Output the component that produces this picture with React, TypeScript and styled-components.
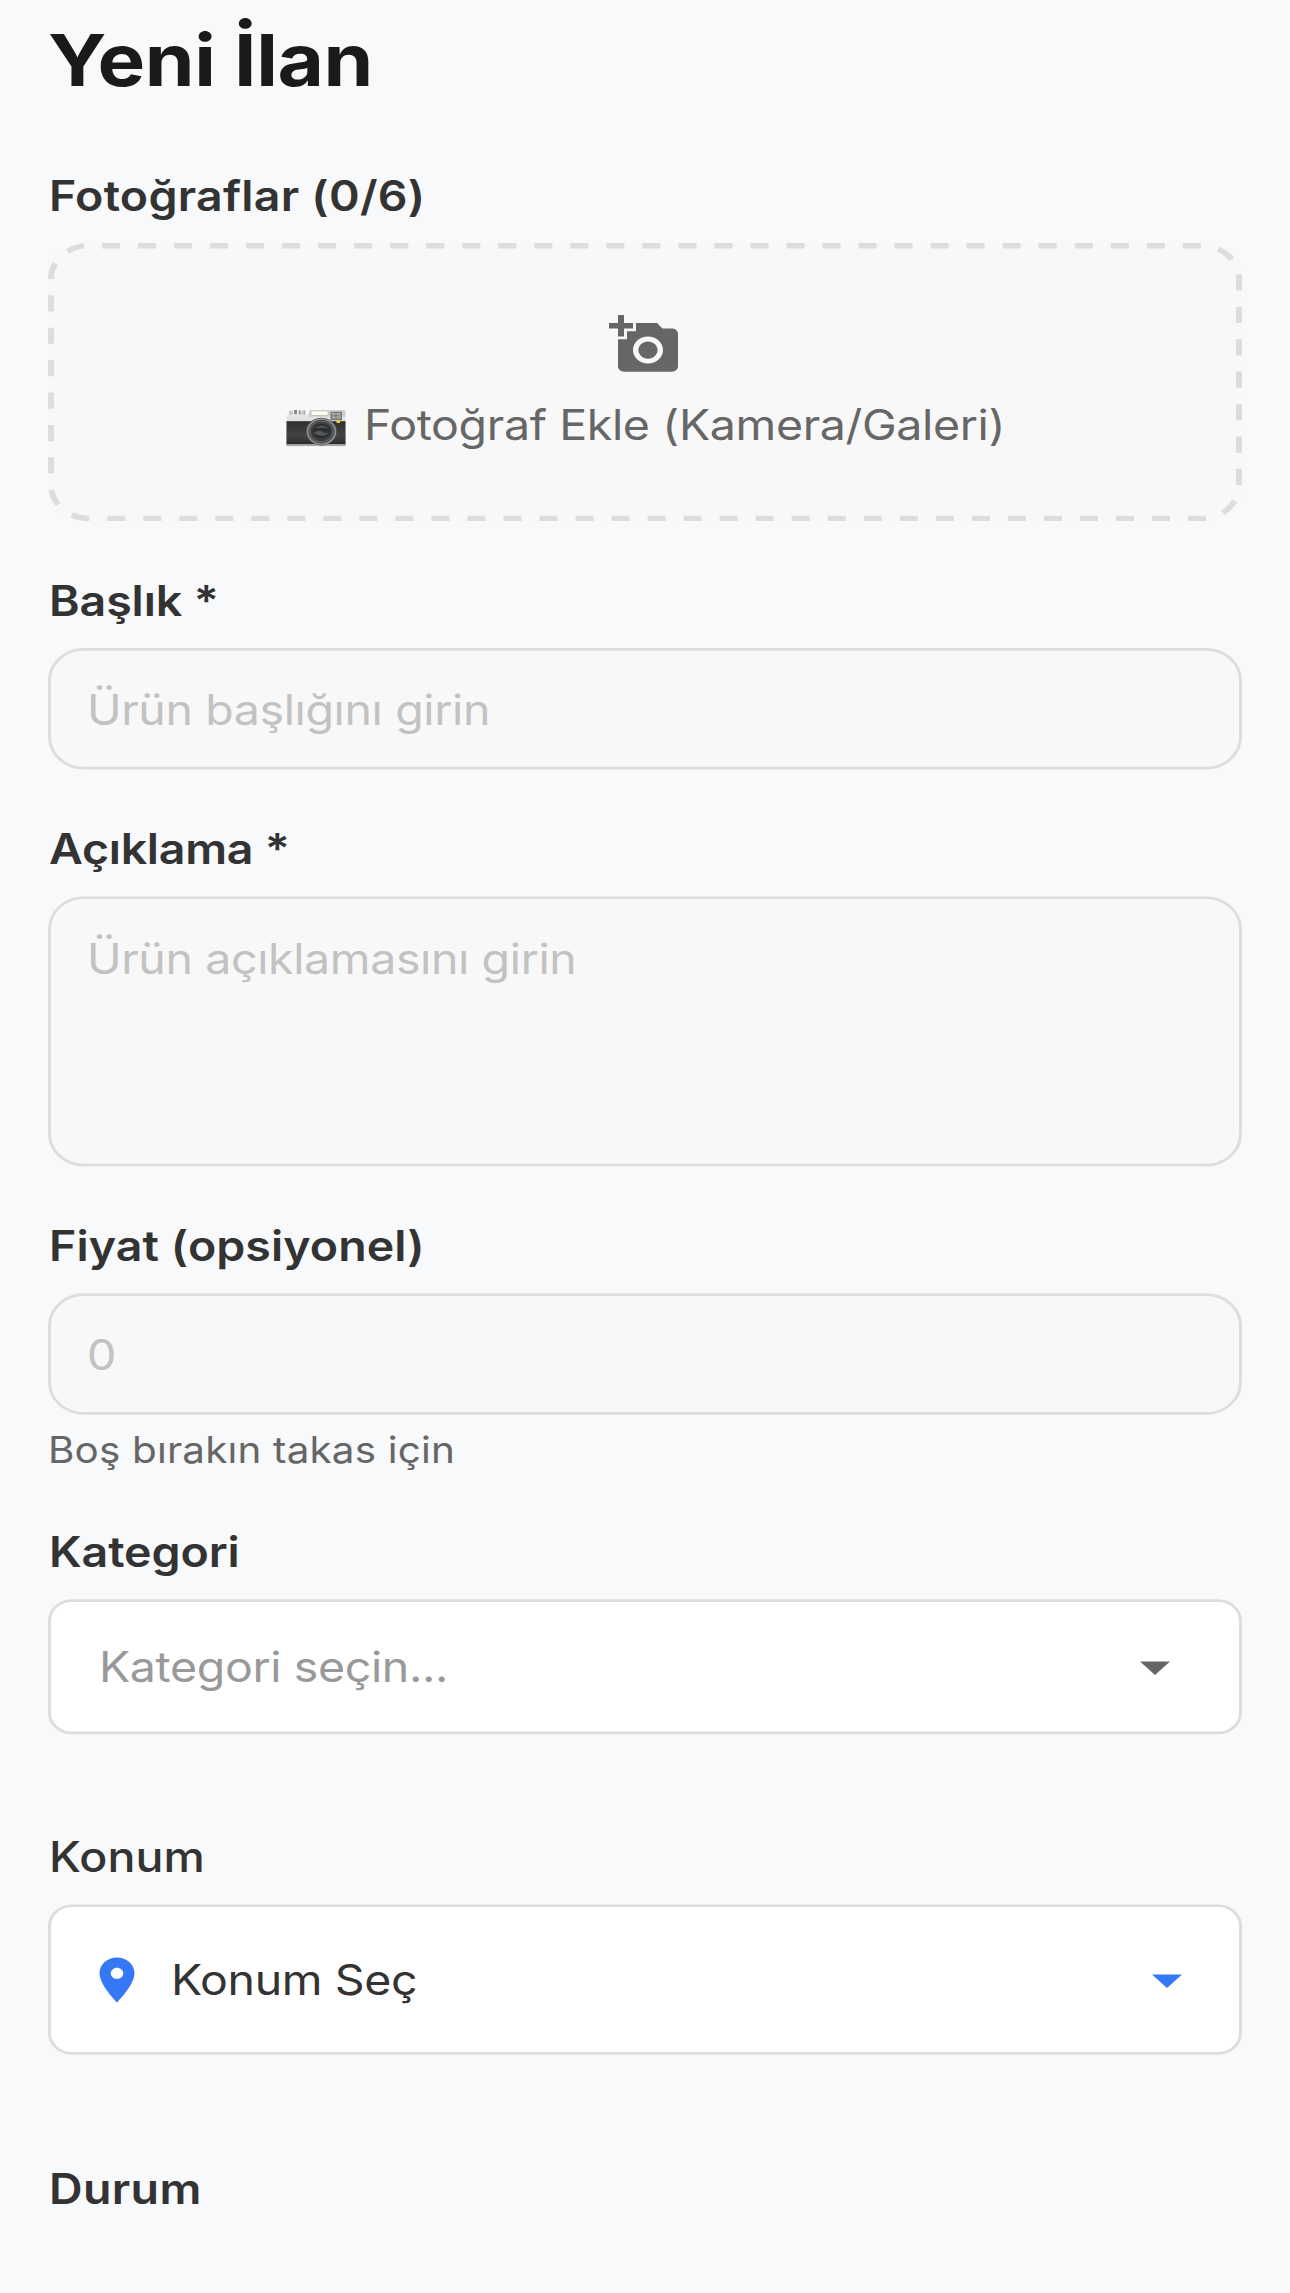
import React from 'react';
import styled, { createGlobalStyle } from 'styled-components';

const GlobalStyle = createGlobalStyle`
  * { box-sizing: border-box; }
  body { margin: 0; background: #f8f9fb; }
`;

const Viewport = styled.div`
  width: 1290px;
  height: 2293px;
  overflow: hidden;
  background: #f8f9fb;
`;

/* The form is laid out on a 3x grid and compressed vertically to fit the viewport. */
const Screen = styled.main`
  display: flex;
  flex-direction: column;
  width: 1290px;
  height: 2548px;
  padding: 16px 48px 0;
  transform: scaleY(0.9);
  transform-origin: 0 0;
  font-family: Inter, 'Liberation Sans', sans-serif;
  font-size: 46.5px;
  line-height: 57px;
  color: #333;
`;

const Title = styled.h1`
  margin: 0 0 73px;
  font-size: 80px;
  line-height: 100px;
  font-weight: 700;
  letter-spacing: -0.35px;
  color: #1a1a1a;
`;

const Field = styled.section<{ $after?: number }>`
  display: flex;
  flex-direction: column;
  margin-bottom: ${(p) => p.$after ?? 60}px;
`;

const Label = styled.label<{ $spacing?: number; $weight?: number }>`
  margin-bottom: 24px;
  padding-left: 1px;
  font-weight: ${(p) => p.$weight ?? 600};
  white-space: nowrap;
  letter-spacing: ${(p) => p.$spacing ?? 0}px;
`;

const PhotoDrop = styled.button`
  position: relative;
  display: flex;
  flex-direction: column;
  align-items: center;
  gap: 25px;
  height: 309px;
  padding: 77px 0 0;
  border: 0;
  border-radius: 36px;
  background: #f8f8f8;
  font: inherit;
  color: #666;
`;

const DashedEdge = styled.svg`
  position: absolute;
  inset: 0;
  width: 1194px;
  height: 309px;
`;

const PhotoCaption = styled.span`
  display: flex;
  align-items: center;
  gap: 18px;
  padding-left: 1px;
  white-space: nowrap;
`;

const CaptionText = styled.span`
  letter-spacing: -0.36px;
`;

const inputLook = `
  width: 100%;
  margin: 0;
  border: 3px solid #ddd;
  border-radius: 36px;
  background: #f8f8f8;
  font: inherit;
  letter-spacing: -0.38px;
  color: #333;
  outline: none;
  resize: none;
  overflow: hidden;
  display: block;
  &::placeholder { color: #c2c2c2; opacity: 1; }
`;

const TextInput = styled.input`
  ${inputLook}
  height: 135px;
  padding: 0 36px;
`;

const TextArea = styled.textarea`
  ${inputLook}
  height: 300px;
  padding: 38px 36px;
`;

const Hint = styled.p`
  margin: 13px 0 0;
  font-size: 40.4px;
  line-height: 51px;
  letter-spacing: 0.18px;
  color: #666;
`;

const Select = styled.button<{ $height: number; $padding: string; $color: string }>`
  display: flex;
  align-items: center;
  width: 100%;
  height: ${(p) => p.$height}px;
  padding: ${(p) => p.$padding};
  border: 3px solid #ddd;
  border-radius: 24px;
  background: #fff;
  font: inherit;
  color: ${(p) => p.$color};
`;

const SelectText = styled.span`
  flex: 1;
  padding-top: 1px;
  text-align: left;
  letter-spacing: -0.37px;
`;

const Icon = styled.svg<{ $size: number; $color: string; $gap?: number }>`
  flex: none;
  display: block;
  width: ${(p) => p.$size}px;
  height: ${(p) => p.$size}px;
  margin-right: ${(p) => p.$gap ?? 0}px;
  fill: ${(p) => p.$color};
`;

const EmojiArt = styled.svg`
  flex: none;
  display: block;
  width: 60px;
  height: 42px;
  margin-top: 6px;
`;

function Arrow({ color }: { color: string }) {
  return (
    <Icon viewBox="0 0 24 24" $size={72} $color={color}>
      <path d="M7 10l5 5 5-5z" />
    </Icon>
  );
}

function CameraEmoji() {
  return (
    <EmojiArt viewBox="0 0 60 42" role="img" aria-label="📷">
      <defs>
        <linearGradient id="silver" x1="0" y1="0" x2="0" y2="1">
          <stop offset="0" stopColor="#e9e9e9" />
          <stop offset="1" stopColor="#bdbdbd" />
        </linearGradient>
        <linearGradient id="leather" x1="0" y1="0" x2="0" y2="1">
          <stop offset="0" stopColor="#2e2e2e" />
          <stop offset="0.6" stopColor="#444" />
          <stop offset="1" stopColor="#2a2a2a" />
        </linearGradient>
      </defs>
      <rect x="3" y="1.5" width="4" height="5" rx="1" fill="#c9c9c9" />
      <rect x="8" y="0.5" width="3" height="5" fill="#8d8d8d" />
      <rect x="12" y="1" width="8" height="5" rx="1" fill="#d2d2d2" />
      <rect x="13" y="1" width="1.5" height="5" fill="#999" />
      <rect x="17.5" y="1" width="1.5" height="5" fill="#aaa" />
      <rect x="0.5" y="5.5" width="59" height="35" rx="1.5" fill="url(#silver)" />
      <path d="M24 0.5h34.5q1 0 1 1.5v6H22z" fill="#cfcfcf" />
      <rect x="25" y="1.5" width="17" height="5" rx="0.8" fill="#fffef0" stroke="#aaa" strokeWidth="0.6" />
      <rect x="0.5" y="13" width="59" height="26" fill="url(#leather)" />
      <rect x="44.5" y="2.5" width="11.5" height="9.5" fill="#7b7b7b" />
      <rect x="46" y="4" width="8.5" height="6" fill="#b2aca4" />
      <path d="M46 7h8.5M50 4v6" stroke="#666" strokeWidth="0.8" />
      <rect x="50.5" y="12" width="3.5" height="3" fill="#f4cf3e" />
      <rect x="0.5" y="38.5" width="59" height="2.2" fill="#aaa" />
      <circle cx="35.5" cy="24.5" r="15.4" fill="#4d4f50" />
      <circle cx="35.5" cy="24.5" r="14" fill="none" stroke="#8d9193" strokeWidth="1.6" />
      <circle cx="35.5" cy="24.5" r="11.5" fill="#3c3d3e" stroke="#5f6365" strokeWidth="1.2" />
      <ellipse cx="35.5" cy="24" rx="9" ry="8.2" fill="#2d2e2f" />
      <path d="M28 21q7-6 15 0q-7-2-15 0z" fill="#5c5e5f" />
      <path d="M27.5 26q5-4 9-1t7-1q-3 6-8.5 5t-7.5-3z" fill="#555759" />
    </EmojiArt>
  );
}

export default function App() {
  return (
    <>
      <GlobalStyle />
      <Viewport>
        <Screen>
          <Title>Yeni İlan</Title>

          <Field>
            <Label $spacing={0.25}>Fotoğraflar (0/6)</Label>
            <PhotoDrop type="button">
              <DashedEdge viewBox="0 0 1194 309">
                <rect
                  x="3"
                  y="3"
                  width="1188"
                  height="303"
                  rx="37"
                  fill="none"
                  stroke="#ddd"
                  strokeWidth="6"
                  pathLength={2916}
                  strokeDasharray="18 18"
                  strokeDashoffset={-14}
                />
              </DashedEdge>
              <Icon viewBox="0 0 24 24" $size={72} $color="#666">
                <path
                  fillRule="evenodd"
                  d="M3 4V1h2v3h3v2H5v3H3V6H0V4h3zm3 6V7h3V4h7l1.830 2H21c1.100 0 2 .9 2 2v12c0 1.100-.9 2-2 2H5c-1.100 0-2-.9-2-2V10h3zm7 9c2.760 0 5-2.240 5-5s-2.240-5-5-5-5 2.240-5 5 2.240 5 5 5zm-3.200-5c0 1.770 1.430 3.200 3.200 3.200s3.200-1.430 3.200-3.200-1.430-3.200-3.200-3.200-3.200 1.430-3.200 3.200z"
                />
              </Icon>
              <PhotoCaption>
                <CameraEmoji />
                <CaptionText>Fotoğraf Ekle (Kamera/Galeri)</CaptionText>
              </PhotoCaption>
            </PhotoDrop>
          </Field>

          <Field $after={60.4}>
            <Label $spacing={-0.1}>Başlık *</Label>
            <TextInput placeholder="Ürün başlığını girin" />
          </Field>

          <Field>
            <Label $spacing={-0.25}>Açıklama *</Label>
            <TextArea placeholder="Ürün açıklamasını girin" />
          </Field>

          <Field>
            <Label $spacing={0.08}>Fiyat (opsiyonel)</Label>
            <TextInput placeholder="0" />
            <Hint>Boş bırakın takas için</Hint>
          </Field>

          <Field $after={108}>
            <Label $spacing={-0.1}>Kategori</Label>
            <Select type="button" $height={150} $padding="0 48px" $color="#999">
              <SelectText>Kategori seçin...</SelectText>
              <Arrow color="#666" />
            </Select>
          </Field>

          <Field $after={120.6}>
            <Label $weight={500} $spacing={0.1}>Konum</Label>
            <Select type="button" $height={167} $padding="0 36px" $color="#333">
              <Icon viewBox="0 0 24 24" $size={60} $color="#3478f6" $gap={24}>
                <path d="M12 2C8.130 2 5 5.130 5 9c0 5.250 7 13 7 13s7-7.750 7-13c0-3.870-3.130-7-7-7zm0 9.500c-1.380 0-2.500-1.120-2.500-2.500s1.120-2.500 2.500-2.500 2.500 1.120 2.500 2.500-1.120 2.500-2.500 2.500z" />
              </Icon>
              <SelectText>Konum Seç</SelectText>
              <Arrow color="#3478f6" />
            </Select>
          </Field>

          <Label $spacing={0.35}>Durum</Label>
        </Screen>
      </Viewport>
    </>
  );
}
